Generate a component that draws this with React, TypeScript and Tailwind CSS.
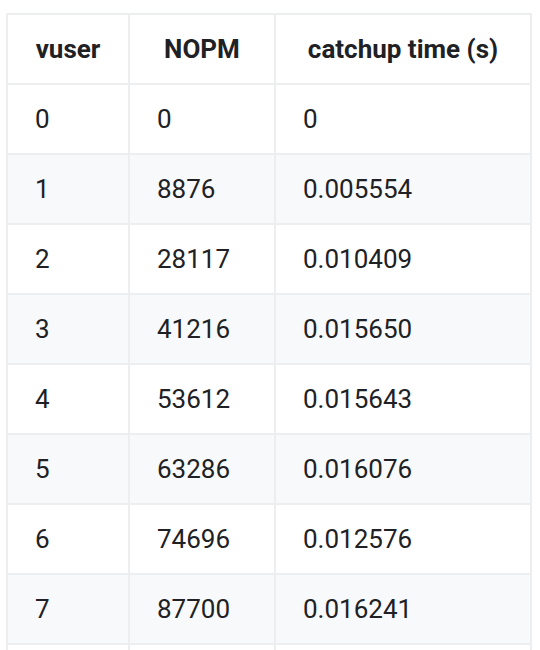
import React from "react";

const rows: [string, string, string][] = [
  ["0", "0", "0"],
  ["1", "8876", "0.005554"],
  ["2", "28117", "0.010409"],
  ["3", "41216", "0.015650"],
  ["4", "53612", "0.015643"],
  ["5", "63286", "0.016076"],
  ["6", "74696", "0.012576"],
  ["7", "87700", "0.016241"],
];

export default function App() {
  return (
    <div className="h-[650px] overflow-hidden bg-white pt-[13px] pl-[6px] font-['Roboto',sans-serif] text-[#202124]">
      <table className="w-[524px] table-fixed border-collapse text-left text-[26px] leading-none">
        <colgroup>
          <col className="w-[122px]" />
          <col className="w-[146px]" />
          <col className="w-[256px]" />
        </colgroup>
        <thead>
          <tr className="h-[70px]">
            <th className="border-2 border-[#eceef0] text-center font-bold">vuser</th>
            <th className="border-2 border-[#eceef0] text-center font-bold">NOPM</th>
            <th className="border-2 border-[#eceef0] text-center font-bold">catchup time (s)</th>
          </tr>
        </thead>
        <tbody>
          {rows.map((r, i) => (
            <tr key={i} className={i % 2 === 1 ? "h-[70px] bg-[#f8f9fa]" : "h-[70px] bg-white"}>
              {r.map((c, j) => (
                <td key={j} className="border-2 border-[#eceef0] pl-[27px]">
                  {c}
                </td>
              ))}
            </tr>
          ))}
          <tr className="h-[70px]">
            <td className="border-2 border-[#eceef0]" />
            <td className="border-2 border-[#eceef0]" />
            <td className="border-2 border-[#eceef0]" />
          </tr>
        </tbody>
      </table>
    </div>
  );
}
